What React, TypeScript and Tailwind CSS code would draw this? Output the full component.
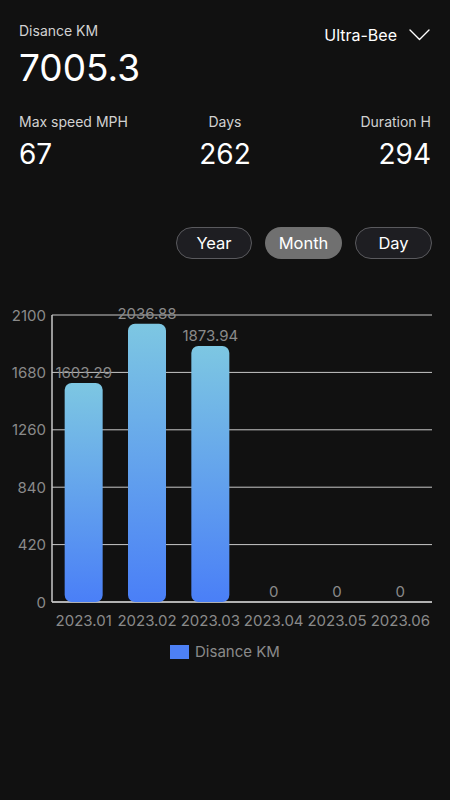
const data = [
  { month: "2023.01", value: 1603.29 },
  { month: "2023.02", value: 2036.88 },
  { month: "2023.03", value: 1873.94 },
  { month: "2023.04", value: 0 },
  { month: "2023.05", value: 0 },
  { month: "2023.06", value: 0 },
]

const ticks = [2100, 1680, 1260, 840, 420, 0]

// plot box in page coordinates
const left = 52
const right = 432
const top = 315
const bottom = 602
const max = 2100

function Stat({ label, value, align }: { label: string; value: string; align: string }) {
  return (
    <div className={`flex flex-col ${align}`}>
      <span className="text-[14px] text-[#d2d2d2] leading-[18px]">{label}</span>
      <span className="text-[28px] text-white leading-[36px] mt-[5px]">{value}</span>
    </div>
  )
}

function Chart() {
  const step = (right - left) / data.length
  const barW = 38
  const y = (v: number) => bottom - (v / max) * (bottom - top)
  return (
    <svg width={450} height={380} viewBox="0 300 450 380" className="block">
      <defs>
        <linearGradient id="bar" x1="0" y1="0" x2="0" y2="1">
          <stop offset="0%" stopColor="#7dc7e2" />
          <stop offset="100%" stopColor="#4a7ff7" />
        </linearGradient>
      </defs>
      {ticks.map((t) => (
        <g key={t}>
          <line x1={left} x2={right} y1={y(t)} y2={y(t)} stroke="#c9c9c9" strokeWidth={1} />
          <text x={46} y={y(t) + 5.5} textAnchor="end" fontSize={15} fill="#8a8a8a">
            {t}
          </text>
        </g>
      ))}
      <line x1={left} x2={left} y1={top} y2={bottom} stroke="#c9c9c9" strokeWidth={1.5} />
      <line x1={left} x2={right} y1={bottom} y2={bottom} stroke="#c9c9c9" strokeWidth={1.5} />
      {data.map((d, i) => {
        const cx = left + step * i + step / 2
        const by = y(d.value)
        return (
          <g key={d.month}>
            {d.value > 0 && (
              <rect x={cx - barW / 2} y={by} width={barW} height={bottom - by} rx={7} fill="url(#bar)" />
            )}
            <text x={cx} y={by - 5} textAnchor="middle" fontSize={15} fill="#8a8a8a">
              {d.value > 0 ? d.value.toFixed(2) : "0"}
            </text>
            <text x={cx} y={626} textAnchor="middle" fontSize={15} fill="#8a8a8a">
              {d.month}
            </text>
          </g>
        )
      })}
      <rect x={170} y={645} width={19} height={14} fill="#4d80f5" />
      <text x={195} y={657} fontSize={15} fill="#8a8a8a">
        Disance KM
      </text>
    </svg>
  )
}

export default function App() {
  return (
    <div className="w-[450px] h-[800px] bg-[#111111] overflow-hidden" style={{ fontFamily: "Inter, 'Noto Sans', sans-serif" }}>
      <div className="px-[19px] pt-[22px]">
        <div className="flex justify-between items-start">
          <div className="flex flex-col">
            <span className="text-[14px] text-[#d2d2d2] leading-[18px]">Disance KM</span>
            <span className="text-[37px] text-white leading-[46px] mt-[5px]">7005.3</span>
          </div>
          <div className="flex items-center gap-[12px] mt-[1px] pr-[1px]">
            <span className="text-[16px] text-white">Ultra-Bee</span>
            <svg width="21" height="12" viewBox="0 0 21 12" fill="none" stroke="white" strokeWidth="1.4" strokeLinecap="round" strokeLinejoin="round">
              <polyline points="1,1 10.5,10.5 20,1" />
            </svg>
          </div>
        </div>
        <div className="grid grid-cols-3 mt-[22px]">
          <Stat label="Max speed MPH" value="67" align="items-start" />
          <Stat label="Days" value="262" align="items-center" />
          <Stat label="Duration H" value="294" align="items-end" />
        </div>
      </div>
      <div className="flex justify-end gap-[13px] pr-[18px] mt-[55px]">
        <button className="w-[76px] h-[32px] rounded-full border border-[#5a5a5e] bg-[#1e1e22] text-white text-[16.5px]">Year</button>
        <button className="w-[77px] h-[32px] rounded-full bg-[#707070] text-white text-[16.5px]">Month</button>
        <button className="w-[77px] h-[32px] rounded-full border border-[#5a5a5e] bg-[#1e1e22] text-white text-[16.5px]">Day</button>
      </div>
      <div className="mt-[41px]">
        <Chart />
      </div>
    </div>
  )
}
